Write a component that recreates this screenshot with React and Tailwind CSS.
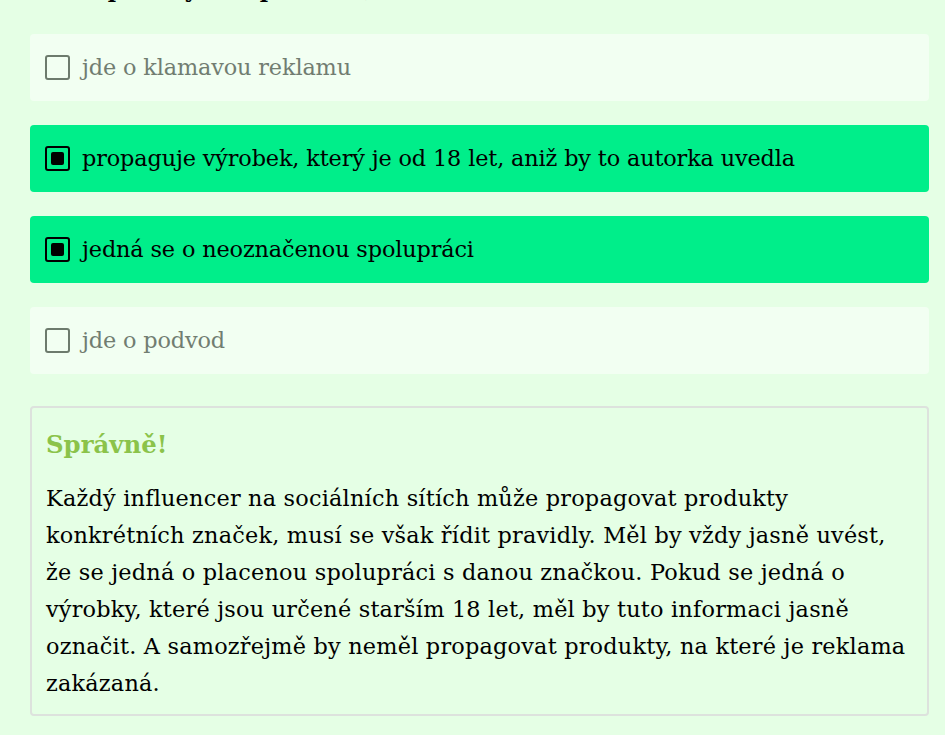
import React from "react";

function Box({ checked }) {
  if (checked)
    return (
      <span className="flex h-[25px] w-[25px] shrink-0 items-center justify-center rounded-[3px] border-2 border-black">
        <span className="h-[13px] w-[13px] rounded-[2px] bg-black" />
      </span>
    );
  return <span className="h-[25px] w-[25px] shrink-0 rounded-[3px] border-2 border-[#6d7b6d]" />;
}

function Option({ checked, children }) {
  return (
    <div
      className={
        "flex h-[67px] items-center gap-[12px] rounded-[4px] pl-[15px] tracking-[-0.15px] " +
        (checked ? "bg-[#00ee8a] text-black" : "bg-[#f2fff2] text-[#717d71]")
      }
    >
      <Box checked={checked} />
      <span className="whitespace-nowrap">{children}</span>
    </div>
  );
}

const lines = [
  "Každý influencer na sociálních sítích může propagovat produkty",
  "konkrétních značek, musí se však řídit pravidly. Měl by vždy jasně uvést,",
  "že se jedná o placenou spolupráci s danou značkou. Pokud se jedná o",
  "výrobky, které jsou určené starším 18 let, měl by tuto informaci jasně",
  "označit. A samozřejmě by neměl propagovat produkty, na které je reklama",
  "zakázaná.",
];

export default function App() {
  return (
    <div
      className="h-[735px] overflow-hidden bg-[#e5ffe5] pl-[30px] pr-[16px] text-[22.4px] leading-[33px]"
      style={{ fontFamily: '"DejaVu Serif", serif' }}
    >
      <div className="-mt-[27px] mb-[28px] h-[33px] whitespace-nowrap font-bold text-black">
        Tento post by měl problém, neboť:
      </div>
      <div className="flex flex-col gap-[24px]">
        <Option>jde o klamavou reklamu</Option>
        <Option checked>propaguje výrobek, který je od 18 let, aniž by to autorka uvedla</Option>
        <Option checked>jedná se o neoznačenou spolupráci</Option>
        <Option>jde o podvod</Option>
      </div>
      <div className="mt-[32px] rounded-[4px] border-2 border-[#dde2dd] px-[14px] pb-[12px] pt-[21px]">
        <div className="text-[24.4px] font-bold leading-[32px] text-[#8bc34a]">Správně!</div>
        <p className="mt-[19px] leading-[37px] tracking-[0.2px] text-black">
          {lines.map((l, i) => (
            <span key={i} className="block whitespace-nowrap">
              {l}
            </span>
          ))}
        </p>
      </div>
    </div>
  );
}
